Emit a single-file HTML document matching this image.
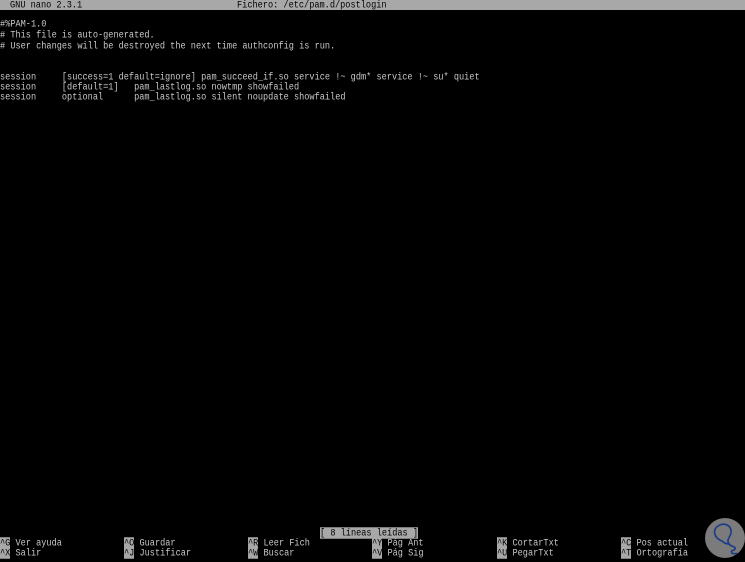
<!DOCTYPE html>
<html><head><meta charset="utf-8"><style>
body{margin:0;width:745px;height:559px;background:#000;overflow:hidden;position:relative;font-family:"Liberation Mono",monospace;}
.l{position:absolute;white-space:pre;font-size:8.6px;color:#c8c8c8;line-height:10px;transform:scaleY(1.15);transform-origin:0 50%;}
.bar{position:absolute;left:0;top:0;width:745px;height:10px;background:#a8a8a8;}
.inv{background:#a8a8a8;color:#000;}
.k{background:#a8a8a8;color:#000;}
</style></head><body>
<div class="bar"></div>
<div class="l" style="left:10px;top:0;color:#000">GNU nano 2.3.1</div>
<div class="l" style="left:237px;top:0;color:#000">Fichero: /etc/pam.d/postlogin</div>
<div class="l" style="left:0;top:19px">#%PAM-1.0</div>
<div class="l" style="left:0;top:30px"># This file is auto-generated.</div>
<div class="l" style="left:0;top:41px"># User changes will be destroyed the next time authconfig is run.</div>
<div class="l" style="left:0;top:72px">session     [success=1 default=ignore] pam_succeed_if.so service !~ gdm* service !~ su* quiet</div>
<div class="l" style="left:0;top:82px">session     [default=1]   pam_lastlog.so nowtmp showfailed</div>
<div class="l" style="left:0;top:92px">session     optional      pam_lastlog.so silent noupdate showfailed</div>
<div class="l inv" style="left:320px;top:528px">[ 8 líneas leídas ]</div>
<div class="l" style="left:0;top:538px"><span class="k">^G</span> Ver ayuda</div>
<div class="l" style="left:0;top:548px"><span class="k">^X</span> Salir</div>
<div class="l" style="left:124px;top:538px"><span class="k">^O</span> Guardar</div>
<div class="l" style="left:124px;top:548px"><span class="k">^J</span> Justificar</div>
<div class="l" style="left:248px;top:538px"><span class="k">^R</span> Leer Fich</div>
<div class="l" style="left:248px;top:548px"><span class="k">^W</span> Buscar</div>
<div class="l" style="left:372px;top:538px"><span class="k">^Y</span> Pág Ant</div>
<div class="l" style="left:372px;top:548px"><span class="k">^V</span> Pág Sig</div>
<div class="l" style="left:497px;top:538px"><span class="k">^K</span> CortarTxt</div>
<div class="l" style="left:497px;top:548px"><span class="k">^U</span> PegarTxt</div>
<div class="l" style="left:621px;top:538px"><span class="k">^C</span> Pos actual</div>
<div class="l" style="left:621px;top:548px"><span class="k">^T</span> Ortografía</div>
<svg style="position:absolute;left:702px;top:516px" width="46" height="46" viewBox="0 0 46 46">
<circle cx="23" cy="22" r="20" fill="#7b7b7b"/>
<path d="M20 25 C12 22 10 14 16 10 C22 6 30 9 29 17 C28 22 24 23 27 28 C29 31 34 30 33 33 C32 35 28 34 30 37 C31 38 34 38 35 37" fill="none" stroke="#1a3a8a" stroke-width="1.6"/>
<path d="M20 25 C22 27 25 28 27 28" fill="none" stroke="#1a3a8a" stroke-width="1.6"/>
</svg>
</body></html>
